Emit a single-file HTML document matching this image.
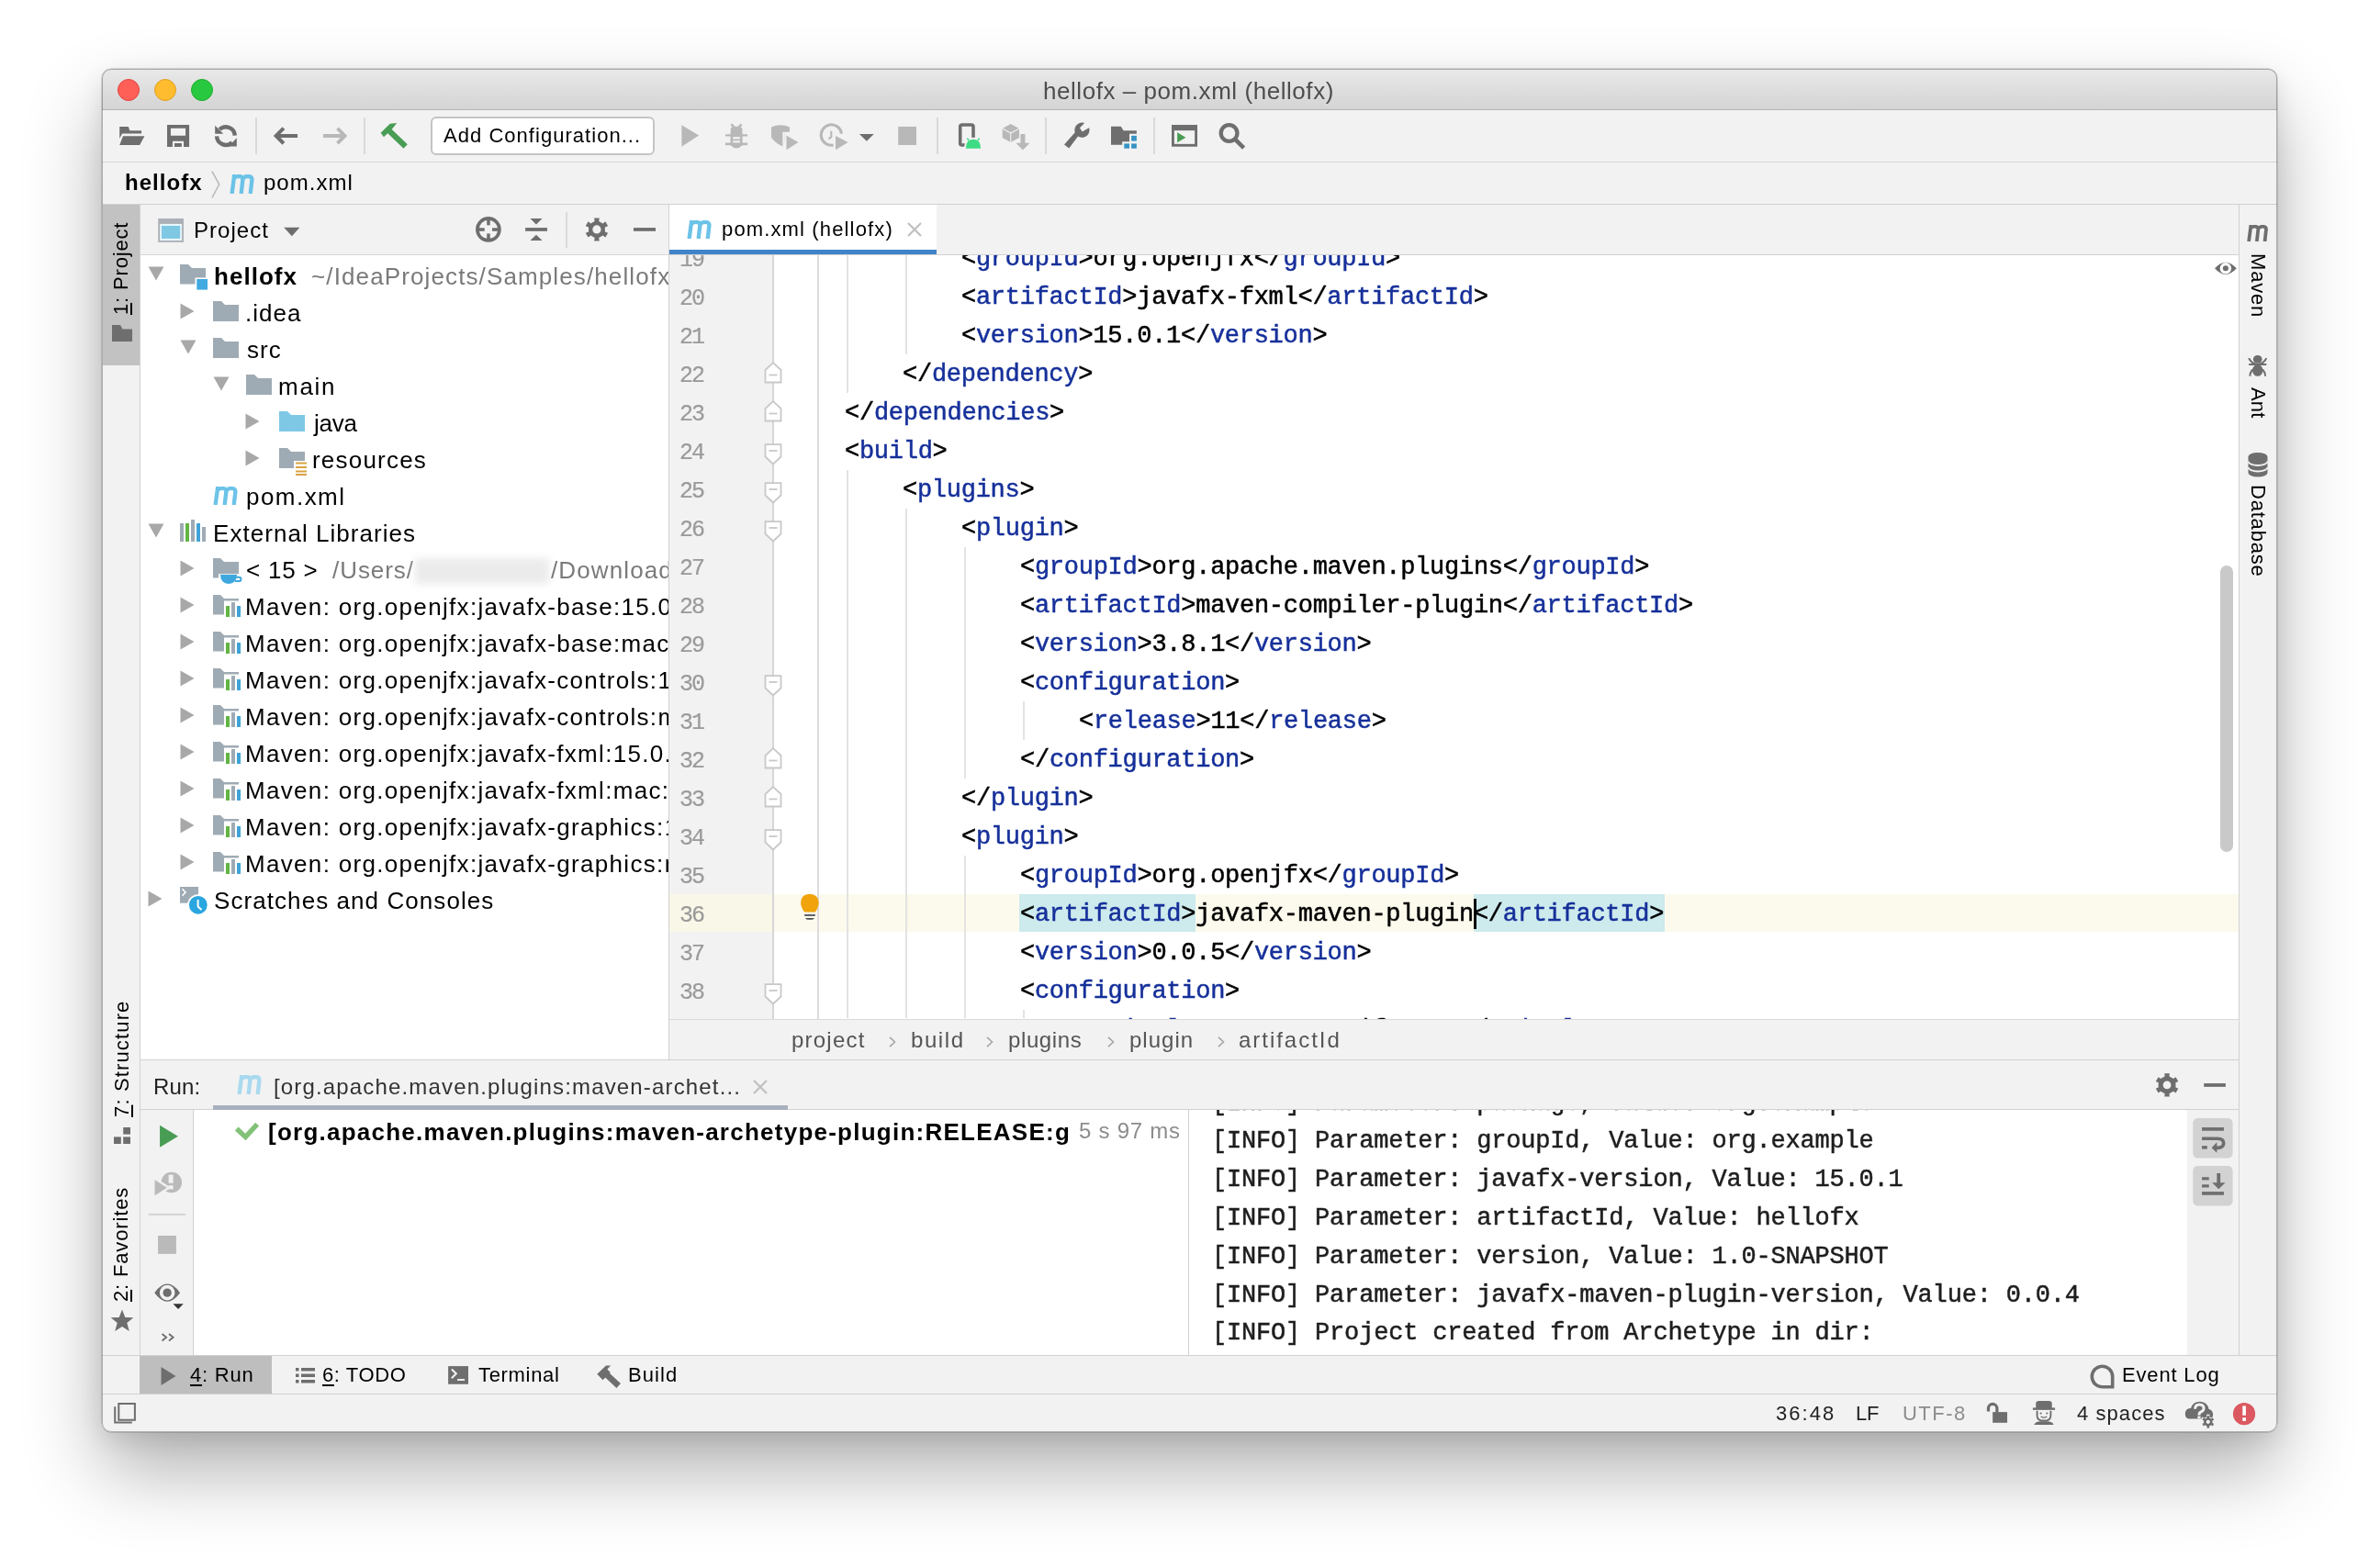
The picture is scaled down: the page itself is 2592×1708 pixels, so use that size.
<!DOCTYPE html><html><head><meta charset="utf-8"><style>
html,body{margin:0;padding:0;background:#fff;width:2592px;height:1708px;overflow:hidden;position:relative}
.t{position:absolute;white-space:nowrap;line-height:1;will-change:transform}
.r{position:absolute;display:block}
.clip{position:absolute;overflow:hidden}
u{text-decoration:underline;text-decoration-thickness:2px;text-underline-offset:3px}
#win{position:absolute;left:111px;top:75px;width:2369px;height:1485px;border-radius:10px;background:#f2f2f2;
 box-shadow:0 0 0 0.5px rgba(0,0,0,0.25), 0 42px 84px rgba(0,0,0,0.31), 0 8px 26px rgba(0,0,0,0.09)}
#wb{position:absolute;left:111px;top:75px;width:2369px;height:1485px;border-radius:10px;border:1px solid rgba(0,0,0,0.28);box-sizing:border-box;pointer-events:none}
</style></head><body>
<div id="win"></div>
<div class="r" style="left:111px;top:75px;width:2369px;height:44px;background:linear-gradient(#e9e9e9,#d4d4d4);border-radius:10px 10px 0 0"></div><div class="r" style="left:111px;top:119px;width:2369px;height:1px;background:#b4b4b4;"></div><div class="r" style="left:128px;top:86px;width:22px;height:22px;border-radius:50%;background:#fe5f57;border:1px solid #e1443e"></div><div class="r" style="left:168px;top:86px;width:22px;height:22px;border-radius:50%;background:#febc2e;border:1px solid #dfa023"></div><div class="r" style="left:208px;top:86px;width:22px;height:22px;border-radius:50%;background:#28c840;border:1px solid #1dad2b"></div><div class="t" style="left:1136.30px;top:85.99px;font-size:26px;color:#4d4d4d;font-weight:normal;letter-spacing:0.552px;font-family:'Liberation Sans', sans-serif;">hellofx – pom.xml (hellofx)</div><div class="r" style="left:111px;top:120px;width:2369px;height:56px;background:#f2f2f2;"></div><div class="r" style="left:111px;top:176px;width:2369px;height:1px;background:#d5d5d5;"></div><div class="r" style="left:469px;top:127px;width:244px;height:42px;background:#fff;border:2px solid #c4c4c4;border-radius:6px;box-sizing:border-box"></div><div class="t" style="left:483.00px;top:137.38px;font-size:22px;color:#000;font-weight:normal;letter-spacing:1.035px;font-family:'Liberation Sans', sans-serif;">Add Configuration...</div><div class="r" style="left:278px;top:128px;width:2px;height:40px;background:#d9d9d9;"></div><div class="r" style="left:396px;top:128px;width:2px;height:40px;background:#d9d9d9;"></div><div class="r" style="left:1020px;top:128px;width:2px;height:40px;background:#d9d9d9;"></div><div class="r" style="left:1138px;top:128px;width:2px;height:40px;background:#d9d9d9;"></div><div class="r" style="left:1256px;top:128px;width:2px;height:40px;background:#d9d9d9;"></div><div class="r" style="left:111px;top:177px;width:2369px;height:45px;background:#f2f2f2;"></div><div class="r" style="left:111px;top:222px;width:2369px;height:1px;background:#d1d1d1;"></div><div class="t" style="left:136.00px;top:187.38px;font-size:24px;color:#000;font-weight:bold;letter-spacing:1.034px;font-family:'Liberation Sans', sans-serif;">hellofx</div><div class="t" style="left:286.70px;top:187.38px;font-size:24px;color:#000;font-weight:normal;letter-spacing:1.025px;font-family:'Liberation Sans', sans-serif;">pom.xml</div><div class="r" style="left:112px;top:223px;width:40px;height:1253px;background:#f2f2f2;"></div><div class="r" style="left:152px;top:223px;width:1px;height:1253px;background:#d1d1d1;"></div><div class="r" style="left:112px;top:223px;width:40px;height:175px;background:#c2c2c2;"></div><div class="t" style="left:121.38px;top:342.60px;transform-origin:0 0;transform:rotate(-90deg);font-size:22px;color:#000;font-weight:normal;letter-spacing:0.831px;font-family:'Liberation Sans', sans-serif;"><u>1</u>: Project</div><div class="t" style="left:122.08px;top:1216.50px;transform-origin:0 0;transform:rotate(-90deg);font-size:22px;color:#000;font-weight:normal;letter-spacing:1.147px;font-family:'Liberation Sans', sans-serif;"><u>7</u>: Structure</div><div class="t" style="left:121.38px;top:1418.20px;transform-origin:0 0;transform:rotate(-90deg);font-size:22px;color:#000;font-weight:normal;letter-spacing:0.843px;font-family:'Liberation Sans', sans-serif;"><u>2</u>: Favorites</div><div class="r" style="left:2438px;top:223px;width:1px;height:1253px;background:#d1d1d1;"></div><div class="r" style="left:2439px;top:223px;width:41px;height:1253px;background:#f2f2f2;"></div><div class="t" style="left:2470.02px;top:276.20px;transform-origin:0 0;transform:rotate(90deg);font-size:22px;color:#000;font-weight:normal;letter-spacing:0.826px;font-family:'Liberation Sans', sans-serif;">Maven</div><div class="t" style="left:2470.02px;top:421.70px;transform-origin:0 0;transform:rotate(90deg);font-size:22px;color:#000;font-weight:normal;letter-spacing:0.195px;font-family:'Liberation Sans', sans-serif;">Ant</div><div class="t" style="left:2470.02px;top:527.50px;transform-origin:0 0;transform:rotate(90deg);font-size:22px;color:#000;font-weight:normal;letter-spacing:0.794px;font-family:'Liberation Sans', sans-serif;">Database</div><div class="r" style="left:153px;top:223px;width:575px;height:54px;background:#f2f2f2;"></div><div class="r" style="left:153px;top:277px;width:575px;height:1px;background:#d6d6d6;"></div><div class="r" style="left:153px;top:278px;width:575px;height:876px;background:#ffffff;"></div><div class="r" style="left:728px;top:223px;width:1px;height:932px;background:#d1d1d1;"></div><div class="t" style="left:210.50px;top:239.18px;font-size:24px;color:#000;font-weight:normal;letter-spacing:1.045px;font-family:'Liberation Sans', sans-serif;">Project</div><div class="r" style="left:616px;top:231px;width:2px;height:39px;background:#d9d9d9;"></div><div class="clip" style="left:153px;top:278px;width:575px;height:876px"><div style="position:absolute;left:-153px;top:-278px;width:2592px;height:1708px"><div class="t" style="left:232.50px;top:287.59px;font-size:26px;color:#000;font-weight:bold;letter-spacing:1.028px;font-family:'Liberation Sans', sans-serif;">hellofx</div><div class="t" style="left:338.70px;top:287.59px;font-size:26px;color:#7a7a7a;font-weight:normal;letter-spacing:1.120px;font-family:'Liberation Sans', sans-serif;">~/IdeaProjects/Samples/hellofx</div><div class="t" style="left:267.00px;top:327.59px;font-size:26px;color:#000;font-weight:normal;letter-spacing:1.020px;font-family:'Liberation Sans', sans-serif;">.idea</div><div class="t" style="left:269.00px;top:367.59px;font-size:26px;color:#000;font-weight:normal;letter-spacing:1.021px;font-family:'Liberation Sans', sans-serif;">src</div><div class="t" style="left:303.30px;top:407.59px;font-size:26px;color:#000;font-weight:normal;letter-spacing:1.735px;font-family:'Liberation Sans', sans-serif;">main</div><div class="t" style="left:341.60px;top:447.59px;font-size:26px;color:#000;font-weight:normal;letter-spacing:-0.279px;font-family:'Liberation Sans', sans-serif;">java</div><div class="t" style="left:339.60px;top:487.59px;font-size:26px;color:#000;font-weight:normal;letter-spacing:1.205px;font-family:'Liberation Sans', sans-serif;">resources</div><div class="t" style="left:268.00px;top:527.59px;font-size:26px;color:#000;font-weight:normal;letter-spacing:1.457px;font-family:'Liberation Sans', sans-serif;">pom.xml</div><div class="t" style="left:231.50px;top:567.59px;font-size:26px;color:#000;font-weight:normal;letter-spacing:1.046px;font-family:'Liberation Sans', sans-serif;">External Libraries</div><div class="t" style="left:268.00px;top:607.59px;font-size:26px;color:#000;font-weight:normal;letter-spacing:0.810px;font-family:'Liberation Sans', sans-serif;">&lt; 15 &gt;</div><div class="t" style="left:362.00px;top:607.59px;font-size:26px;color:#7a7a7a;font-weight:normal;letter-spacing:0.947px;font-family:'Liberation Sans', sans-serif;">/Users/</div><div class="r" style="left:452px;top:607.6px;width:146px;height:28px;background:#ebebeb;filter:blur(4px)"></div><div class="t" style="left:600.00px;top:607.59px;font-size:26px;color:#7a7a7a;font-weight:normal;letter-spacing:1.120px;font-family:'Liberation Sans', sans-serif;">/Downloads/jdk-15</div><div class="t" style="left:267.00px;top:647.59px;font-size:26px;color:#000;font-weight:normal;letter-spacing:1.320px;font-family:'Liberation Sans', sans-serif;">Maven: org.openjfx:javafx-base:15.0.1</div><div class="t" style="left:267.00px;top:687.59px;font-size:26px;color:#000;font-weight:normal;letter-spacing:1.320px;font-family:'Liberation Sans', sans-serif;">Maven: org.openjfx:javafx-base:mac:15.0.1</div><div class="t" style="left:267.00px;top:727.59px;font-size:26px;color:#000;font-weight:normal;letter-spacing:1.320px;font-family:'Liberation Sans', sans-serif;">Maven: org.openjfx:javafx-controls:15.0.1</div><div class="t" style="left:267.00px;top:767.59px;font-size:26px;color:#000;font-weight:normal;letter-spacing:1.320px;font-family:'Liberation Sans', sans-serif;">Maven: org.openjfx:javafx-controls:mac:15.0.1</div><div class="t" style="left:267.00px;top:807.59px;font-size:26px;color:#000;font-weight:normal;letter-spacing:1.320px;font-family:'Liberation Sans', sans-serif;">Maven: org.openjfx:javafx-fxml:15.0.1</div><div class="t" style="left:267.00px;top:847.59px;font-size:26px;color:#000;font-weight:normal;letter-spacing:1.320px;font-family:'Liberation Sans', sans-serif;">Maven: org.openjfx:javafx-fxml:mac:15.0.1</div><div class="t" style="left:267.00px;top:887.59px;font-size:26px;color:#000;font-weight:normal;letter-spacing:1.320px;font-family:'Liberation Sans', sans-serif;">Maven: org.openjfx:javafx-graphics:15.0.1</div><div class="t" style="left:267.00px;top:927.59px;font-size:26px;color:#000;font-weight:normal;letter-spacing:1.320px;font-family:'Liberation Sans', sans-serif;">Maven: org.openjfx:javafx-graphics:mac:15.0.1</div><div class="t" style="left:232.50px;top:967.59px;font-size:26px;color:#000;font-weight:normal;letter-spacing:1.070px;font-family:'Liberation Sans', sans-serif;">Scratches and Consoles</div></div></div><div class="r" style="left:729px;top:223px;width:1709px;height:54px;background:#f2f2f2;"></div><div class="r" style="left:729px;top:277px;width:1709px;height:1px;background:#d1d1d1;"></div><div class="r" style="left:729px;top:223px;width:291px;height:49px;background:#ffffff;"></div><div class="r" style="left:729px;top:272px;width:291px;height:5px;background:#4083c9;"></div><div class="t" style="left:785.90px;top:238.78px;font-size:22px;color:#000;font-weight:normal;letter-spacing:1.140px;font-family:'Liberation Sans', sans-serif;">pom.xml (hellofx)</div><div class="r" style="left:729px;top:278px;width:1709px;height:832px;background:#ffffff;"></div><div class="r" style="left:729px;top:278px;width:112px;height:832px;background:#f2f2f2;"></div><div class="r" style="left:729px;top:1110px;width:1709px;height:1px;background:#dadada;"></div><div class="r" style="left:729px;top:1111px;width:1709px;height:43px;background:#f2f2f2;"></div><div class="t" style="left:861.60px;top:1121.18px;font-size:24px;color:#555555;font-weight:normal;letter-spacing:1.222px;font-family:'Liberation Sans', sans-serif;">project</div><div class="t" style="left:992.20px;top:1121.18px;font-size:24px;color:#555555;font-weight:normal;letter-spacing:1.585px;font-family:'Liberation Sans', sans-serif;">build</div><div class="t" style="left:1098.00px;top:1121.18px;font-size:24px;color:#555555;font-weight:normal;letter-spacing:0.608px;font-family:'Liberation Sans', sans-serif;">plugins</div><div class="t" style="left:1229.60px;top:1121.18px;font-size:24px;color:#555555;font-weight:normal;letter-spacing:1.019px;font-family:'Liberation Sans', sans-serif;">plugin</div><div class="t" style="left:1349.40px;top:1121.18px;font-size:24px;color:#555555;font-weight:normal;letter-spacing:1.968px;font-family:'Liberation Sans', sans-serif;">artifactId</div><div class="r" style="left:153px;top:1154px;width:2285px;height:1px;background:#d1d1d1;"></div><div class="r" style="left:153px;top:1155px;width:2285px;height:54px;background:#f2f2f2;"></div><div class="r" style="left:153px;top:1208px;width:2285px;height:1px;background:#d1d1d1;"></div><div class="t" style="left:166.60px;top:1171.68px;font-size:24px;color:#222;font-weight:normal;letter-spacing:0.158px;font-family:'Liberation Sans', sans-serif;">Run:</div><div class="t" style="left:297.70px;top:1171.68px;font-size:24px;color:#333;font-weight:normal;letter-spacing:1.159px;font-family:'Liberation Sans', sans-serif;">[org.apache.maven.plugins:maven-archet...</div><div class="r" style="left:232px;top:1204px;width:626px;height:5px;background:#a8b0bf;"></div><div class="r" style="left:153px;top:1209px;width:58px;height:267px;background:#f2f2f2;"></div><div class="r" style="left:210px;top:1209px;width:1px;height:267px;background:#d1d1d1;"></div><div class="r" style="left:211px;top:1209px;width:1083px;height:267px;background:#ffffff;"></div><div class="r" style="left:1294px;top:1209px;width:1px;height:267px;background:#d1d1d1;"></div><div class="r" style="left:1295px;top:1209px;width:1087px;height:267px;background:#ffffff;"></div><div class="r" style="left:2382px;top:1209px;width:56px;height:267px;background:#f2f2f2;"></div><div class="clip" style="left:211px;top:1209px;width:954px;height:267px"><div style="position:absolute;left:-211px;top:-1209px;width:2592px;height:1708px"><div class="t" style="left:292.00px;top:1219.69px;font-size:26px;color:#000;font-weight:bold;letter-spacing:1.245px;font-family:'Liberation Sans', sans-serif;">[org.apache.maven.plugins:maven-archetype-plugin:RELEASE:generate]</div></div></div><div class="t" style="left:1175.00px;top:1219.68px;font-size:24px;color:#8c8c8c;font-weight:normal;letter-spacing:0.745px;font-family:'Liberation Sans', sans-serif;">5 s 97 ms</div><div class="clip" style="left:1295px;top:1209px;width:1087px;height:267px"><div style="position:absolute;left:-1295px;top:-1209px;width:2592px;height:1708px"><div class="t" style="left:1319.50px;top:1188.50px;font-size:27px;color:#1e1e1e;font-weight:normal;letter-spacing:-0.190px;font-family:'Liberation Mono', monospace;-webkit-text-stroke:0.5px currentColor;">[INFO] Parameter: package, Value: org.example</div></div></div><div class="t" style="left:1319.50px;top:1230.30px;font-size:27px;color:#1e1e1e;font-weight:normal;letter-spacing:-0.190px;font-family:'Liberation Mono', monospace;-webkit-text-stroke:0.5px currentColor;">[INFO] Parameter: groupId, Value: org.example</div><div class="t" style="left:1319.50px;top:1272.10px;font-size:27px;color:#1e1e1e;font-weight:normal;letter-spacing:-0.190px;font-family:'Liberation Mono', monospace;-webkit-text-stroke:0.5px currentColor;">[INFO] Parameter: javafx-version, Value: 15.0.1</div><div class="t" style="left:1319.50px;top:1313.90px;font-size:27px;color:#1e1e1e;font-weight:normal;letter-spacing:-0.190px;font-family:'Liberation Mono', monospace;-webkit-text-stroke:0.5px currentColor;">[INFO] Parameter: artifactId, Value: hellofx</div><div class="t" style="left:1319.50px;top:1355.70px;font-size:27px;color:#1e1e1e;font-weight:normal;letter-spacing:-0.190px;font-family:'Liberation Mono', monospace;-webkit-text-stroke:0.5px currentColor;">[INFO] Parameter: version, Value: 1.0-SNAPSHOT</div><div class="t" style="left:1319.50px;top:1397.50px;font-size:27px;color:#1e1e1e;font-weight:normal;letter-spacing:-0.190px;font-family:'Liberation Mono', monospace;-webkit-text-stroke:0.5px currentColor;">[INFO] Parameter: javafx-maven-plugin-version, Value: 0.0.4</div><div class="t" style="left:1319.50px;top:1439.30px;font-size:27px;color:#1e1e1e;font-weight:normal;letter-spacing:-0.190px;font-family:'Liberation Mono', monospace;-webkit-text-stroke:0.5px currentColor;">[INFO] Project created from Archetype in dir:</div><div class="r" style="left:111px;top:1476px;width:2369px;height:1px;background:#d1d1d1;"></div><div class="r" style="left:111px;top:1477px;width:2369px;height:41px;background:#f2f2f2;"></div><div class="r" style="left:152px;top:1477px;width:144px;height:41px;background:#bebebe;"></div><div class="t" style="left:206.70px;top:1487.08px;font-size:22px;color:#000;font-weight:normal;letter-spacing:0.783px;font-family:'Liberation Sans', sans-serif;"><u>4</u>: Run</div><div class="t" style="left:351.30px;top:1487.08px;font-size:22px;color:#000;font-weight:normal;letter-spacing:0.600px;font-family:'Liberation Sans', sans-serif;"><u>6</u>: TODO</div><div class="t" style="left:521.00px;top:1487.08px;font-size:22px;color:#000;font-weight:normal;letter-spacing:0.679px;font-family:'Liberation Sans', sans-serif;">Terminal</div><div class="t" style="left:684.00px;top:1487.08px;font-size:22px;color:#000;font-weight:normal;letter-spacing:1.079px;font-family:'Liberation Sans', sans-serif;">Build</div><div class="t" style="left:2310.80px;top:1487.08px;font-size:22px;color:#000;font-weight:normal;letter-spacing:0.833px;font-family:'Liberation Sans', sans-serif;">Event Log</div><div class="r" style="left:111px;top:1518px;width:2369px;height:1px;background:#d1d1d1;"></div><div class="r" style="left:111px;top:1519px;width:2369px;height:41px;background:#f2f2f2;border-radius:0 0 10px 10px"></div><div class="t" style="left:1934.00px;top:1529.38px;font-size:22px;color:#222;font-weight:normal;letter-spacing:2.045px;font-family:'Liberation Sans', sans-serif;">36:48</div><div class="t" style="left:2021.00px;top:1529.38px;font-size:22px;color:#222;font-weight:normal;letter-spacing:-0.235px;font-family:'Liberation Sans', sans-serif;">LF</div><div class="t" style="left:2071.60px;top:1529.38px;font-size:22px;color:#8c8c8c;font-weight:normal;letter-spacing:1.477px;font-family:'Liberation Sans', sans-serif;">UTF-8</div><div class="t" style="left:2262.00px;top:1529.38px;font-size:22px;color:#222;font-weight:normal;letter-spacing:1.064px;font-family:'Liberation Sans', sans-serif;">4 spaces</div><div class="clip" style="left:729px;top:278px;width:1709px;height:832px"><div style="position:absolute;left:-729px;top:-278px;width:2592px;height:1708px"><div class="r" style="left:729px;top:974px;width:1709px;height:41px;background:#fcfaed;"></div><div class="r" style="left:729px;top:974px;width:112px;height:41px;background:#f9f7e7;"></div><div class="r" style="left:1110px;top:974px;width:192px;height:41px;background:#cdeaed;"></div><div class="r" style="left:1605px;top:974px;width:208px;height:41px;background:#cdeaed;"></div><div class="r" style="left:890px;top:278px;width:2px;height:832px;background:#dcdcdc;"></div><div class="r" style="left:922px;top:278px;width:2px;height:150px;background:#e3e3e3;"></div><div class="r" style="left:922px;top:512px;width:2px;height:597px;background:#e3e3e3;"></div><div class="r" style="left:986px;top:278px;width:2px;height:108px;background:#e3e3e3;"></div><div class="r" style="left:986px;top:554px;width:2px;height:555px;background:#e3e3e3;"></div><div class="r" style="left:1050px;top:596px;width:2px;height:252px;background:#e3e3e3;"></div><div class="r" style="left:1050px;top:932px;width:2px;height:177px;background:#e3e3e3;"></div><div class="r" style="left:1114px;top:764px;width:2px;height:42px;background:#e3e3e3;"></div><div class="r" style="left:1114px;top:1100px;width:2px;height:9px;background:#e3e3e3;"></div><div class="r" style="left:841px;top:278px;width:2px;height:832px;background:#d6d6d6;"></div><div class="t" style="left:1047.16px;top:269.10px;font-size:27px;color:#000;font-weight:normal;letter-spacing:-0.270px;font-family:'Liberation Mono', monospace;-webkit-text-stroke:0.5px currentColor;">&lt;<span style="color:#16309a">groupId</span>&gt;org.openjfx&lt;/<span style="color:#16309a">groupId</span>&gt;</div><div class="t" style="left:740.40px;top:270.64px;font-size:25px;color:#9a9a9a;font-weight:normal;letter-spacing:-2.002px;font-family:'Liberation Mono', monospace;-webkit-text-stroke:0.5px currentColor;-webkit-text-stroke:0.2px currentColor;">19</div><div class="t" style="left:1047.16px;top:311.10px;font-size:27px;color:#000;font-weight:normal;letter-spacing:-0.270px;font-family:'Liberation Mono', monospace;-webkit-text-stroke:0.5px currentColor;">&lt;<span style="color:#16309a">artifactId</span>&gt;javafx-fxml&lt;/<span style="color:#16309a">artifactId</span>&gt;</div><div class="t" style="left:740.40px;top:312.64px;font-size:25px;color:#9a9a9a;font-weight:normal;letter-spacing:-2.002px;font-family:'Liberation Mono', monospace;-webkit-text-stroke:0.5px currentColor;-webkit-text-stroke:0.2px currentColor;">20</div><div class="t" style="left:1047.16px;top:353.10px;font-size:27px;color:#000;font-weight:normal;letter-spacing:-0.270px;font-family:'Liberation Mono', monospace;-webkit-text-stroke:0.5px currentColor;">&lt;<span style="color:#16309a">version</span>&gt;15.0.1&lt;/<span style="color:#16309a">version</span>&gt;</div><div class="t" style="left:740.40px;top:354.64px;font-size:25px;color:#9a9a9a;font-weight:normal;letter-spacing:-2.002px;font-family:'Liberation Mono', monospace;-webkit-text-stroke:0.5px currentColor;-webkit-text-stroke:0.2px currentColor;">21</div><div class="t" style="left:983.44px;top:395.10px;font-size:27px;color:#000;font-weight:normal;letter-spacing:-0.270px;font-family:'Liberation Mono', monospace;-webkit-text-stroke:0.5px currentColor;">&lt;/<span style="color:#16309a">dependency</span>&gt;</div><div class="t" style="left:740.40px;top:396.64px;font-size:25px;color:#9a9a9a;font-weight:normal;letter-spacing:-2.002px;font-family:'Liberation Mono', monospace;-webkit-text-stroke:0.5px currentColor;-webkit-text-stroke:0.2px currentColor;">22</div><div class="t" style="left:919.72px;top:437.10px;font-size:27px;color:#000;font-weight:normal;letter-spacing:-0.270px;font-family:'Liberation Mono', monospace;-webkit-text-stroke:0.5px currentColor;">&lt;/<span style="color:#16309a">dependencies</span>&gt;</div><div class="t" style="left:740.40px;top:438.64px;font-size:25px;color:#9a9a9a;font-weight:normal;letter-spacing:-2.002px;font-family:'Liberation Mono', monospace;-webkit-text-stroke:0.5px currentColor;-webkit-text-stroke:0.2px currentColor;">23</div><div class="t" style="left:919.72px;top:479.10px;font-size:27px;color:#000;font-weight:normal;letter-spacing:-0.270px;font-family:'Liberation Mono', monospace;-webkit-text-stroke:0.5px currentColor;">&lt;<span style="color:#16309a">build</span>&gt;</div><div class="t" style="left:740.40px;top:480.64px;font-size:25px;color:#9a9a9a;font-weight:normal;letter-spacing:-2.002px;font-family:'Liberation Mono', monospace;-webkit-text-stroke:0.5px currentColor;-webkit-text-stroke:0.2px currentColor;">24</div><div class="t" style="left:983.44px;top:521.10px;font-size:27px;color:#000;font-weight:normal;letter-spacing:-0.270px;font-family:'Liberation Mono', monospace;-webkit-text-stroke:0.5px currentColor;">&lt;<span style="color:#16309a">plugins</span>&gt;</div><div class="t" style="left:740.40px;top:522.64px;font-size:25px;color:#9a9a9a;font-weight:normal;letter-spacing:-2.002px;font-family:'Liberation Mono', monospace;-webkit-text-stroke:0.5px currentColor;-webkit-text-stroke:0.2px currentColor;">25</div><div class="t" style="left:1047.16px;top:563.10px;font-size:27px;color:#000;font-weight:normal;letter-spacing:-0.270px;font-family:'Liberation Mono', monospace;-webkit-text-stroke:0.5px currentColor;">&lt;<span style="color:#16309a">plugin</span>&gt;</div><div class="t" style="left:740.40px;top:564.64px;font-size:25px;color:#9a9a9a;font-weight:normal;letter-spacing:-2.002px;font-family:'Liberation Mono', monospace;-webkit-text-stroke:0.5px currentColor;-webkit-text-stroke:0.2px currentColor;">26</div><div class="t" style="left:1110.88px;top:605.10px;font-size:27px;color:#000;font-weight:normal;letter-spacing:-0.270px;font-family:'Liberation Mono', monospace;-webkit-text-stroke:0.5px currentColor;">&lt;<span style="color:#16309a">groupId</span>&gt;org.apache.maven.plugins&lt;/<span style="color:#16309a">groupId</span>&gt;</div><div class="t" style="left:740.40px;top:606.64px;font-size:25px;color:#9a9a9a;font-weight:normal;letter-spacing:-2.002px;font-family:'Liberation Mono', monospace;-webkit-text-stroke:0.5px currentColor;-webkit-text-stroke:0.2px currentColor;">27</div><div class="t" style="left:1110.88px;top:647.10px;font-size:27px;color:#000;font-weight:normal;letter-spacing:-0.270px;font-family:'Liberation Mono', monospace;-webkit-text-stroke:0.5px currentColor;">&lt;<span style="color:#16309a">artifactId</span>&gt;maven-compiler-plugin&lt;/<span style="color:#16309a">artifactId</span>&gt;</div><div class="t" style="left:740.40px;top:648.64px;font-size:25px;color:#9a9a9a;font-weight:normal;letter-spacing:-2.002px;font-family:'Liberation Mono', monospace;-webkit-text-stroke:0.5px currentColor;-webkit-text-stroke:0.2px currentColor;">28</div><div class="t" style="left:1110.88px;top:689.10px;font-size:27px;color:#000;font-weight:normal;letter-spacing:-0.270px;font-family:'Liberation Mono', monospace;-webkit-text-stroke:0.5px currentColor;">&lt;<span style="color:#16309a">version</span>&gt;3.8.1&lt;/<span style="color:#16309a">version</span>&gt;</div><div class="t" style="left:740.40px;top:690.64px;font-size:25px;color:#9a9a9a;font-weight:normal;letter-spacing:-2.002px;font-family:'Liberation Mono', monospace;-webkit-text-stroke:0.5px currentColor;-webkit-text-stroke:0.2px currentColor;">29</div><div class="t" style="left:1110.88px;top:731.10px;font-size:27px;color:#000;font-weight:normal;letter-spacing:-0.270px;font-family:'Liberation Mono', monospace;-webkit-text-stroke:0.5px currentColor;">&lt;<span style="color:#16309a">configuration</span>&gt;</div><div class="t" style="left:740.40px;top:732.64px;font-size:25px;color:#9a9a9a;font-weight:normal;letter-spacing:-2.002px;font-family:'Liberation Mono', monospace;-webkit-text-stroke:0.5px currentColor;-webkit-text-stroke:0.2px currentColor;">30</div><div class="t" style="left:1174.60px;top:773.10px;font-size:27px;color:#000;font-weight:normal;letter-spacing:-0.270px;font-family:'Liberation Mono', monospace;-webkit-text-stroke:0.5px currentColor;">&lt;<span style="color:#16309a">release</span>&gt;11&lt;/<span style="color:#16309a">release</span>&gt;</div><div class="t" style="left:740.40px;top:774.64px;font-size:25px;color:#9a9a9a;font-weight:normal;letter-spacing:-2.002px;font-family:'Liberation Mono', monospace;-webkit-text-stroke:0.5px currentColor;-webkit-text-stroke:0.2px currentColor;">31</div><div class="t" style="left:1110.88px;top:815.10px;font-size:27px;color:#000;font-weight:normal;letter-spacing:-0.270px;font-family:'Liberation Mono', monospace;-webkit-text-stroke:0.5px currentColor;">&lt;/<span style="color:#16309a">configuration</span>&gt;</div><div class="t" style="left:740.40px;top:816.64px;font-size:25px;color:#9a9a9a;font-weight:normal;letter-spacing:-2.002px;font-family:'Liberation Mono', monospace;-webkit-text-stroke:0.5px currentColor;-webkit-text-stroke:0.2px currentColor;">32</div><div class="t" style="left:1047.16px;top:857.10px;font-size:27px;color:#000;font-weight:normal;letter-spacing:-0.270px;font-family:'Liberation Mono', monospace;-webkit-text-stroke:0.5px currentColor;">&lt;/<span style="color:#16309a">plugin</span>&gt;</div><div class="t" style="left:740.40px;top:858.64px;font-size:25px;color:#9a9a9a;font-weight:normal;letter-spacing:-2.002px;font-family:'Liberation Mono', monospace;-webkit-text-stroke:0.5px currentColor;-webkit-text-stroke:0.2px currentColor;">33</div><div class="t" style="left:1047.16px;top:899.10px;font-size:27px;color:#000;font-weight:normal;letter-spacing:-0.270px;font-family:'Liberation Mono', monospace;-webkit-text-stroke:0.5px currentColor;">&lt;<span style="color:#16309a">plugin</span>&gt;</div><div class="t" style="left:740.40px;top:900.64px;font-size:25px;color:#9a9a9a;font-weight:normal;letter-spacing:-2.002px;font-family:'Liberation Mono', monospace;-webkit-text-stroke:0.5px currentColor;-webkit-text-stroke:0.2px currentColor;">34</div><div class="t" style="left:1110.88px;top:941.10px;font-size:27px;color:#000;font-weight:normal;letter-spacing:-0.270px;font-family:'Liberation Mono', monospace;-webkit-text-stroke:0.5px currentColor;">&lt;<span style="color:#16309a">groupId</span>&gt;org.openjfx&lt;/<span style="color:#16309a">groupId</span>&gt;</div><div class="t" style="left:740.40px;top:942.64px;font-size:25px;color:#9a9a9a;font-weight:normal;letter-spacing:-2.002px;font-family:'Liberation Mono', monospace;-webkit-text-stroke:0.5px currentColor;-webkit-text-stroke:0.2px currentColor;">35</div><div class="t" style="left:1110.88px;top:983.10px;font-size:27px;color:#000;font-weight:normal;letter-spacing:-0.270px;font-family:'Liberation Mono', monospace;-webkit-text-stroke:0.5px currentColor;">&lt;<span style="color:#16309a">artifactId</span>&gt;javafx-maven-plugin&lt;/<span style="color:#16309a">artifactId</span>&gt;</div><div class="t" style="left:740.40px;top:984.64px;font-size:25px;color:#9a9a9a;font-weight:normal;letter-spacing:-2.002px;font-family:'Liberation Mono', monospace;-webkit-text-stroke:0.5px currentColor;-webkit-text-stroke:0.2px currentColor;">36</div><div class="t" style="left:1110.88px;top:1025.10px;font-size:27px;color:#000;font-weight:normal;letter-spacing:-0.270px;font-family:'Liberation Mono', monospace;-webkit-text-stroke:0.5px currentColor;">&lt;<span style="color:#16309a">version</span>&gt;0.0.5&lt;/<span style="color:#16309a">version</span>&gt;</div><div class="t" style="left:740.40px;top:1026.64px;font-size:25px;color:#9a9a9a;font-weight:normal;letter-spacing:-2.002px;font-family:'Liberation Mono', monospace;-webkit-text-stroke:0.5px currentColor;-webkit-text-stroke:0.2px currentColor;">37</div><div class="t" style="left:1110.88px;top:1067.10px;font-size:27px;color:#000;font-weight:normal;letter-spacing:-0.270px;font-family:'Liberation Mono', monospace;-webkit-text-stroke:0.5px currentColor;">&lt;<span style="color:#16309a">configuration</span>&gt;</div><div class="t" style="left:740.40px;top:1068.64px;font-size:25px;color:#9a9a9a;font-weight:normal;letter-spacing:-2.002px;font-family:'Liberation Mono', monospace;-webkit-text-stroke:0.5px currentColor;-webkit-text-stroke:0.2px currentColor;">38</div><div class="t" style="left:1174.60px;top:1109.10px;font-size:27px;color:#000;font-weight:normal;letter-spacing:-0.270px;font-family:'Liberation Mono', monospace;-webkit-text-stroke:0.5px currentColor;">&lt;<span style="color:#16309a">mainClass</span>&gt;org.openjfx.App&lt;/<span style="color:#16309a">mainClass</span>&gt;</div><div class="t" style="left:740.40px;top:1110.64px;font-size:25px;color:#9a9a9a;font-weight:normal;letter-spacing:-2.002px;font-family:'Liberation Mono', monospace;-webkit-text-stroke:0.5px currentColor;-webkit-text-stroke:0.2px currentColor;">39</div></div></div><div class="r" style="left:1605px;top:979px;width:3px;height:33px;background:#000;"></div><svg class="r" style="left:120px;top:125px" width="180" height="45" viewBox="0 0 2380 595" preserveAspectRatio="none">
<path fill="#6e6e6e" d="M135,172 H262 L282,228 H450 V272 H172 L135,345 Z"/>
<path fill="#6e6e6e" d="M185,308 H495 L425,435 H135 Z"/>
<path fill="#6e6e6e" fill-rule="evenodd" d="M820,145 H1138 V462 H1058 V380 H898 V462 H820 Z M872,195 V302 H1085 V195 Z"/>
<rect fill="#6e6e6e" x="925" y="410" width="105" height="52"/>
<path fill="none" stroke="#6e6e6e" stroke-width="58" d="M1575,212 A130,130 0 0 1 1795,300"/>
<path fill="none" stroke="#6e6e6e" stroke-width="58" d="M1755,398 A130,130 0 0 1 1535,310"/>
<path fill="#6e6e6e" d="M1510,155 V275 H1630 Z"/>
<path fill="#6e6e6e" d="M1822,335 V455 H1702 Z"/>
</svg><svg class="r" style="left:290px;top:125px" width="180" height="45" viewBox="0 0 2380 595" preserveAspectRatio="none">
<path fill="none" stroke="#6e6e6e" stroke-width="52" d="M250,192 L140,303 L250,413 M140,303 H450"/>
<path fill="none" stroke="#b8b8b8" stroke-width="52" d="M1025,195 L1130,303 L1025,410 M820,303 H1130"/>
<path fill="#499c54" d="M1648,262 L1782,128 L1880,120 L1812,205 L1692,320 Z"/>
<path fill="none" stroke="#499c54" stroke-width="82" d="M1760,222 L2005,455"/>
</svg><svg class="r" style="left:730px;top:125px" width="280" height="45" viewBox="0 0 2380 382" preserveAspectRatio="none">
<path fill="#b8b8b8" d="M105,95 L265,190 L105,295 Z"/>
<path fill="#b8b8b8" d="M560,120 Q612,95 665,120 L668,180 H715 V200 H668 V258 H715 V283 H668 Q640,310 612,310 Q585,310 557,283 H510 V258 H557 V200 H510 V180 H557 Z"/>
<rect fill="#f2f2f2" x="580" y="205" width="65" height="20"/><rect fill="#f2f2f2" x="580" y="240" width="65" height="18"/>
<path fill="none" stroke="#b8b8b8" stroke-width="22" d="M565,88 L592,118 M660,88 L633,118"/>
<path fill="#b8b8b8" d="M935,115 Q1020,75 1105,115 V160 H1060 V240 L1040,290 Q980,270 935,210 Z"/>
<path fill="#f2f2f2" d="M1040,160 H1060 V250 L1040,290 Z"/>
<path fill="#b8b8b8" d="M1075,190 L1185,255 L1075,325 Z"/>
<path fill="none" stroke="#b8b8b8" stroke-width="26" d="M1510,280 A95,95 0 1 1 1585,175"/>
<path fill="none" stroke="#b8b8b8" stroke-width="18" d="M1490,150 V205 L1465,225"/>
<path fill="#b8b8b8" d="M1530,195 L1645,255 L1530,325 Z"/>
<path fill="#6e6e6e" d="M1750,178 H1885 L1818,243 Z"/>
<rect fill="#b8b8b8" x="2110" y="110" width="168" height="170"/>
</svg><svg class="r" style="left:1030px;top:120px" width="340" height="55" viewBox="0 0 2380 385" preserveAspectRatio="none">
<path fill="none" stroke="#6e6e6e" stroke-width="25" d="M152,266 H124 Q110,266 110,252 V126 Q110,112 124,112 H196 Q210,112 210,126 V218"/>
<path fill="#f2f2f2" d="M140,300 Q140,208 210,208 Q280,208 280,300 Z"/>
<path fill="#3ddc84" d="M153,293 Q153,222 210,222 Q267,222 267,293 Z"/>
<path fill="none" stroke="#3ddc84" stroke-width="11" d="M176,232 L164,214 M244,232 L256,214"/>
<path fill="#b8b8b8" d="M432,140 L495,105 L560,140 V210 L495,245 L432,210 Z"/>
<path fill="none" stroke="#f2f2f2" stroke-width="8" d="M432,140 L495,175 L560,140 M495,175 V245"/>
<path fill="#b8b8b8" d="M570,182 H605 V250 H640 L588,305 L535,250 H570 Z"/>
<path fill="#6e6e6e" d="M1040,95 A57,57 0 1 1 1008,200 L940,290 L903,262 L985,170 A57,57 0 0 1 1040,95 Z"/><path fill="#f2f2f2" d="M1075,80 L1022,135 L1040,165 L1110,125 Z"/>
<path fill="#6e6e6e" d="M1260,125 H1335 L1355,155 H1455 V265 H1260 Z"/>
<rect fill="#f2f2f2" x="1400" y="180" width="70" height="125"/><rect fill="#f2f2f2" x="1345" y="240" width="125" height="65"/>
<rect fill="#3592c4" x="1415" y="195" width="40" height="40"/><rect fill="#3592c4" x="1360" y="255" width="40" height="37"/><rect fill="#3592c4" x="1415" y="255" width="40" height="37"/>
<rect fill="none" stroke="#6e6e6e" stroke-width="20" x="1732" y="122" width="176" height="146"/>
<rect fill="#6e6e6e" x="1722" y="112" width="196" height="43"/>
<path fill="#499c54" d="M1765,170 L1830,208 L1765,247 Z"/>
<circle fill="none" stroke="#6e6e6e" stroke-width="30" cx="2160" cy="175" r="62"/>
<path fill="none" stroke="#6e6e6e" stroke-width="32" d="M2205,222 L2272,288"/>
</svg><svg class="r" style="left:120px;top:180px" width="300" height="45" viewBox="0 0 2380 357" preserveAspectRatio="none">
<path fill="none" stroke="#b4b4b4" stroke-width="11" d="M880,52 L942,165 L880,282"/>

</svg><svg class="r" style="left:155px;top:225px" width="200" height="50" viewBox="0 0 2380 595" preserveAspectRatio="none">
<rect fill="#abb0b6" x="205" y="155" width="330" height="307"/>
<rect fill="#e8f6fc" x="228" y="225" width="285" height="215"/>
<rect fill="#7ec8e3" x="250" y="250" width="240" height="165"/>
<path fill="#6e6e6e" d="M1835,272 H2040 L1938,385 Z"/>
</svg><svg class="r" style="left:500px;top:225px" width="220" height="50" viewBox="0 0 2380 541" preserveAspectRatio="none">
<circle fill="none" stroke="#6e6e6e" stroke-width="40" cx="345" cy="270" r="130"/>
<rect fill="#6e6e6e" x="327" y="155" width="38" height="65"/><rect fill="#6e6e6e" x="327" y="318" width="38" height="75"/>
<rect fill="#6e6e6e" x="225" y="252" width="75" height="38"/><rect fill="#6e6e6e" x="390" y="252" width="75" height="38"/>
<path fill="#6e6e6e" d="M838,142 H980 L908,210 Z M838,400 H980 L908,332 Z"/><rect fill="#6e6e6e" x="780" y="250" width="258" height="40"/>
<path fill="#6e6e6e" fill-rule="evenodd" d="M1597.0,173.2 L1591.9,135.3 L1652.1,135.3 L1647.0,173.2 L1693.3,199.9 L1723.6,176.6 L1753.7,228.7 L1718.4,243.3 L1718.4,296.7 L1753.7,311.3 L1723.6,363.4 L1693.3,340.1 L1647.0,366.8 L1652.1,404.7 L1591.9,404.7 L1597.0,366.8 L1550.7,340.1 L1520.4,363.4 L1490.3,311.3 L1525.6,296.7 L1525.6,243.3 L1490.3,228.7 L1520.4,176.6 L1550.7,199.9 Z M1672,270 A50,50 0 1 0 1572,270 A50,50 0 1 0 1672,270 Z"/>
<rect fill="#6e6e6e" x="2055" y="250" width="260" height="40"/>
</svg><svg class="r" style="left:249px;top:190px" width="30" height="21" viewBox="0 0 100 70" preserveAspectRatio="none"><path fill="none" stroke="#6cc3e8" stroke-width="14.5" d="M12,70 L21,0 M20.5,14 Q25,6.7 37,6.7 Q52.5,6.7 51,21 L45.5,70 M51,17 Q56,6.7 69.5,6.7 Q86.5,6.7 84.5,21 L79,70"/></svg><svg class="r" style="left:747px;top:240px" width="30" height="20" viewBox="0 0 100 70" preserveAspectRatio="none"><path fill="none" stroke="#6cc3e8" stroke-width="14.5" d="M12,70 L21,0 M20.5,14 Q25,6.7 37,6.7 Q52.5,6.7 51,21 L45.5,70 M51,17 Q56,6.7 69.5,6.7 Q86.5,6.7 84.5,21 L79,70"/></svg><svg class="r" style="left:2446px;top:245px" width="26" height="18" viewBox="0 0 100 70" preserveAspectRatio="none"><path fill="none" stroke="#6e6e6e" stroke-width="14.5" d="M12,70 L21,0 M20.5,14 Q25,6.7 37,6.7 Q52.5,6.7 51,21 L45.5,70 M51,17 Q56,6.7 69.5,6.7 Q86.5,6.7 84.5,21 L79,70"/></svg><svg class="r" style="left:988px;top:242px" width="16" height="16" viewBox="0 0 16 16"><path d="M1,1 L15,15 M15,1 L1,15" stroke="#c0c0c0" stroke-width="2.2"/></svg><div class="clip" style="left:153px;top:278px;width:575px;height:876px"><div style="position:absolute;left:-153px;top:-278px;width:2592px;height:1708px"><svg class="r" style="left:160.5px;top:290.1px" width="18" height="16" viewBox="0 0 18 16"><path fill="#a8a8a8" d="M0.5,0.5 H17.5 L9,15.5 Z"/></svg><svg class="r" style="left:196px;top:288.0px" width="30" height="28" viewBox="0 0 30 28"><path fill="#9fabb4" d="M0,0 H9 L13,4 H28 V21.6 H0 Z"/><rect fill="#fff" x="16.5" y="14.5" width="13.5" height="13.5"/><rect fill="#3fa9e0" x="18.3" y="16" width="11.7" height="11.6"/></svg><svg class="r" style="left:196.1px;top:329.8px" width="16" height="18" viewBox="0 0 16 18"><path fill="#a8a8a8" d="M0.5,0.5 L15.5,9 L0.5,17.5 Z"/></svg><svg class="r" style="left:232px;top:328.1px" width="28" height="22" viewBox="0 0 28 22"><path fill="#9fabb4" d="M0,0 H9 L13,4 H28 V22 H0 Z"/></svg><svg class="r" style="left:196.1px;top:370.1px" width="18" height="16" viewBox="0 0 18 16"><path fill="#a8a8a8" d="M0.5,0.5 H17.5 L9,15.5 Z"/></svg><svg class="r" style="left:232px;top:368.1px" width="28" height="22" viewBox="0 0 28 22"><path fill="#9fabb4" d="M0,0 H9 L13,4 H28 V22 H0 Z"/></svg><svg class="r" style="left:231.7px;top:410.1px" width="18" height="16" viewBox="0 0 18 16"><path fill="#a8a8a8" d="M0.5,0.5 H17.5 L9,15.5 Z"/></svg><svg class="r" style="left:268px;top:408.1px" width="28" height="22" viewBox="0 0 28 22"><path fill="#9fabb4" d="M0,0 H9 L13,4 H28 V22 H0 Z"/></svg><svg class="r" style="left:267.3px;top:449.8px" width="16" height="18" viewBox="0 0 16 18"><path fill="#a8a8a8" d="M0.5,0.5 L15.5,9 L0.5,17.5 Z"/></svg><svg class="r" style="left:304px;top:448.1px" width="28" height="22" viewBox="0 0 28 22"><path fill="#7ec8e6" d="M0,0 H9 L13,4 H28 V22 H0 Z"/></svg><svg class="r" style="left:267.3px;top:489.8px" width="16" height="18" viewBox="0 0 16 18"><path fill="#a8a8a8" d="M0.5,0.5 L15.5,9 L0.5,17.5 Z"/></svg><svg class="r" style="left:304px;top:488.1px" width="28" height="22" viewBox="0 0 28 22"><path fill="#9fabb4" d="M0,0 H9 L13,4 H28 V22 H0 Z"/></svg><svg class="r" style="left:320px;top:501.6px" width="15" height="16" viewBox="0 0 15 16"><rect fill="#fff" x="0" y="0" width="15" height="16"/><g fill="#d9a343"><rect x="2" y="1.5" width="12" height="2"/><rect x="2" y="6" width="12" height="2"/><rect x="2" y="10.5" width="12" height="2"/><rect x="2" y="14" width="12" height="2"/></g></svg><svg class="r" style="left:231px;top:530.1px" width="30" height="20" viewBox="0 0 100 70" preserveAspectRatio="none"><path fill="none" stroke="#6cc3e8" stroke-width="14.5" d="M12,70 L21,0 M20.5,14 Q25,6.7 37,6.7 Q52.5,6.7 51,21 L45.5,70 M51,17 Q56,6.7 69.5,6.7 Q86.5,6.7 84.5,21 L79,70"/></svg><svg class="r" style="left:160.5px;top:570.1px" width="18" height="16" viewBox="0 0 18 16"><path fill="#a8a8a8" d="M0.5,0.5 H17.5 L9,15.5 Z"/></svg><svg class="r" style="left:196px;top:566.1px" width="28" height="24" viewBox="0 0 28 24"><rect fill="#9fabb4" x="0" y="4" width="4" height="20"/><rect fill="#62b543" x="6" y="4" width="4" height="20"/><rect fill="#9fabb4" x="12" y="0" width="4" height="24"/><rect fill="#40a3d8" x="18" y="4" width="4" height="20"/><rect fill="#9fabb4" x="24" y="8" width="4" height="16"/></svg><svg class="r" style="left:196.1px;top:609.8000000000001px" width="16" height="18" viewBox="0 0 16 18"><path fill="#a8a8a8" d="M0.5,0.5 L15.5,9 L0.5,17.5 Z"/></svg><svg class="r" style="left:232px;top:608.1px" width="32" height="30" viewBox="0 0 32 30"><path fill="#9fabb4" d="M0,0 H8 L12,4 H28 V17.5 H6 V21.5 H0 Z"/><path fill="#fff" d="M6,17.5 H28 V19 H34 V30 H6 Z"/><path fill="#3ea8de" d="M8,18 H26 Q26,27.6 17,28 Q8,27.6 8,18 Z"/><path fill="none" stroke="#3ea8de" stroke-width="2" d="M25,20.8 H28.2 Q30.5,20.8 30.5,22.9 Q30.5,25 28.2,25 H24"/></svg><svg class="r" style="left:196.1px;top:649.8000000000001px" width="16" height="18" viewBox="0 0 16 18"><path fill="#a8a8a8" d="M0.5,0.5 L15.5,9 L0.5,17.5 Z"/></svg><svg class="r" style="left:232px;top:648.1px" width="32" height="24" viewBox="0 0 32 24"><path fill="#9fabb4" d="M0,0 H8 L12,4 H28 V21.5 H0 Z"/><rect fill="#fff" x="12" y="6.5" width="18" height="17.5"/><rect fill="#62b543" x="14" y="12" width="4" height="12"/><rect fill="#9fabb4" x="20" y="8" width="4" height="16"/><rect fill="#40a3d8" x="26" y="12" width="4" height="12"/></svg><svg class="r" style="left:196.1px;top:689.8000000000001px" width="16" height="18" viewBox="0 0 16 18"><path fill="#a8a8a8" d="M0.5,0.5 L15.5,9 L0.5,17.5 Z"/></svg><svg class="r" style="left:232px;top:688.1px" width="32" height="24" viewBox="0 0 32 24"><path fill="#9fabb4" d="M0,0 H8 L12,4 H28 V21.5 H0 Z"/><rect fill="#fff" x="12" y="6.5" width="18" height="17.5"/><rect fill="#62b543" x="14" y="12" width="4" height="12"/><rect fill="#9fabb4" x="20" y="8" width="4" height="16"/><rect fill="#40a3d8" x="26" y="12" width="4" height="12"/></svg><svg class="r" style="left:196.1px;top:729.8000000000001px" width="16" height="18" viewBox="0 0 16 18"><path fill="#a8a8a8" d="M0.5,0.5 L15.5,9 L0.5,17.5 Z"/></svg><svg class="r" style="left:232px;top:728.1px" width="32" height="24" viewBox="0 0 32 24"><path fill="#9fabb4" d="M0,0 H8 L12,4 H28 V21.5 H0 Z"/><rect fill="#fff" x="12" y="6.5" width="18" height="17.5"/><rect fill="#62b543" x="14" y="12" width="4" height="12"/><rect fill="#9fabb4" x="20" y="8" width="4" height="16"/><rect fill="#40a3d8" x="26" y="12" width="4" height="12"/></svg><svg class="r" style="left:196.1px;top:769.8000000000001px" width="16" height="18" viewBox="0 0 16 18"><path fill="#a8a8a8" d="M0.5,0.5 L15.5,9 L0.5,17.5 Z"/></svg><svg class="r" style="left:232px;top:768.1px" width="32" height="24" viewBox="0 0 32 24"><path fill="#9fabb4" d="M0,0 H8 L12,4 H28 V21.5 H0 Z"/><rect fill="#fff" x="12" y="6.5" width="18" height="17.5"/><rect fill="#62b543" x="14" y="12" width="4" height="12"/><rect fill="#9fabb4" x="20" y="8" width="4" height="16"/><rect fill="#40a3d8" x="26" y="12" width="4" height="12"/></svg><svg class="r" style="left:196.1px;top:809.8000000000001px" width="16" height="18" viewBox="0 0 16 18"><path fill="#a8a8a8" d="M0.5,0.5 L15.5,9 L0.5,17.5 Z"/></svg><svg class="r" style="left:232px;top:808.1px" width="32" height="24" viewBox="0 0 32 24"><path fill="#9fabb4" d="M0,0 H8 L12,4 H28 V21.5 H0 Z"/><rect fill="#fff" x="12" y="6.5" width="18" height="17.5"/><rect fill="#62b543" x="14" y="12" width="4" height="12"/><rect fill="#9fabb4" x="20" y="8" width="4" height="16"/><rect fill="#40a3d8" x="26" y="12" width="4" height="12"/></svg><svg class="r" style="left:196.1px;top:849.8000000000001px" width="16" height="18" viewBox="0 0 16 18"><path fill="#a8a8a8" d="M0.5,0.5 L15.5,9 L0.5,17.5 Z"/></svg><svg class="r" style="left:232px;top:848.1px" width="32" height="24" viewBox="0 0 32 24"><path fill="#9fabb4" d="M0,0 H8 L12,4 H28 V21.5 H0 Z"/><rect fill="#fff" x="12" y="6.5" width="18" height="17.5"/><rect fill="#62b543" x="14" y="12" width="4" height="12"/><rect fill="#9fabb4" x="20" y="8" width="4" height="16"/><rect fill="#40a3d8" x="26" y="12" width="4" height="12"/></svg><svg class="r" style="left:196.1px;top:889.8000000000001px" width="16" height="18" viewBox="0 0 16 18"><path fill="#a8a8a8" d="M0.5,0.5 L15.5,9 L0.5,17.5 Z"/></svg><svg class="r" style="left:232px;top:888.1px" width="32" height="24" viewBox="0 0 32 24"><path fill="#9fabb4" d="M0,0 H8 L12,4 H28 V21.5 H0 Z"/><rect fill="#fff" x="12" y="6.5" width="18" height="17.5"/><rect fill="#62b543" x="14" y="12" width="4" height="12"/><rect fill="#9fabb4" x="20" y="8" width="4" height="16"/><rect fill="#40a3d8" x="26" y="12" width="4" height="12"/></svg><svg class="r" style="left:196.1px;top:929.8000000000001px" width="16" height="18" viewBox="0 0 16 18"><path fill="#a8a8a8" d="M0.5,0.5 L15.5,9 L0.5,17.5 Z"/></svg><svg class="r" style="left:232px;top:928.1px" width="32" height="24" viewBox="0 0 32 24"><path fill="#9fabb4" d="M0,0 H8 L12,4 H28 V21.5 H0 Z"/><rect fill="#fff" x="12" y="6.5" width="18" height="17.5"/><rect fill="#62b543" x="14" y="12" width="4" height="12"/><rect fill="#9fabb4" x="20" y="8" width="4" height="16"/><rect fill="#40a3d8" x="26" y="12" width="4" height="12"/></svg><svg class="r" style="left:160.5px;top:969.8000000000001px" width="16" height="18" viewBox="0 0 16 18"><path fill="#a8a8a8" d="M0.5,0.5 L15.5,9 L0.5,17.5 Z"/></svg><svg class="r" style="left:196px;top:966.0px" width="30" height="32" viewBox="0 0 30 32"><rect fill="#9fabb4" x="0" y="0" width="20" height="17.7"/><path fill="none" stroke="#fff" stroke-width="1.6" d="M2.5,2.2 L6,6 L2.5,9.8"/><circle fill="#fff" cx="19.8" cy="19.8" r="11.6"/><circle fill="#2aa6e0" cx="19.8" cy="19.8" r="9.9"/><path fill="none" stroke="#fff" stroke-width="2" d="M19.6,14 V21.5 L23.5,25"/></svg></div></div><svg class="r" style="left:832px;top:393.8px" width="20" height="24" viewBox="0 0 20 24"><path fill="#fff" stroke="#c8c8c8" stroke-width="1.8" d="M1.5,9 L10,1.2 L18.5,9 V22.5 H1.5 Z"/><path stroke="#c8c8c8" stroke-width="1.8" d="M5.5,14.5 H14.5"/></svg><svg class="r" style="left:832px;top:435.8px" width="20" height="24" viewBox="0 0 20 24"><path fill="#fff" stroke="#c8c8c8" stroke-width="1.8" d="M1.5,9 L10,1.2 L18.5,9 V22.5 H1.5 Z"/><path stroke="#c8c8c8" stroke-width="1.8" d="M5.5,14.5 H14.5"/></svg><svg class="r" style="left:832px;top:813.8px" width="20" height="24" viewBox="0 0 20 24"><path fill="#fff" stroke="#c8c8c8" stroke-width="1.8" d="M1.5,9 L10,1.2 L18.5,9 V22.5 H1.5 Z"/><path stroke="#c8c8c8" stroke-width="1.8" d="M5.5,14.5 H14.5"/></svg><svg class="r" style="left:832px;top:855.8px" width="20" height="24" viewBox="0 0 20 24"><path fill="#fff" stroke="#c8c8c8" stroke-width="1.8" d="M1.5,9 L10,1.2 L18.5,9 V22.5 H1.5 Z"/><path stroke="#c8c8c8" stroke-width="1.8" d="M5.5,14.5 H14.5"/></svg><svg class="r" style="left:832px;top:482.8px" width="20" height="24" viewBox="0 0 20 24"><path fill="#fff" stroke="#c8c8c8" stroke-width="1.8" d="M1.5,1.2 H18.5 V14.5 L10,22.5 L1.5,14.5 Z"/><path stroke="#c8c8c8" stroke-width="1.8" d="M5.5,8 H14.5"/></svg><svg class="r" style="left:832px;top:524.8px" width="20" height="24" viewBox="0 0 20 24"><path fill="#fff" stroke="#c8c8c8" stroke-width="1.8" d="M1.5,1.2 H18.5 V14.5 L10,22.5 L1.5,14.5 Z"/><path stroke="#c8c8c8" stroke-width="1.8" d="M5.5,8 H14.5"/></svg><svg class="r" style="left:832px;top:566.8px" width="20" height="24" viewBox="0 0 20 24"><path fill="#fff" stroke="#c8c8c8" stroke-width="1.8" d="M1.5,1.2 H18.5 V14.5 L10,22.5 L1.5,14.5 Z"/><path stroke="#c8c8c8" stroke-width="1.8" d="M5.5,8 H14.5"/></svg><svg class="r" style="left:832px;top:734.8px" width="20" height="24" viewBox="0 0 20 24"><path fill="#fff" stroke="#c8c8c8" stroke-width="1.8" d="M1.5,1.2 H18.5 V14.5 L10,22.5 L1.5,14.5 Z"/><path stroke="#c8c8c8" stroke-width="1.8" d="M5.5,8 H14.5"/></svg><svg class="r" style="left:832px;top:902.8px" width="20" height="24" viewBox="0 0 20 24"><path fill="#fff" stroke="#c8c8c8" stroke-width="1.8" d="M1.5,1.2 H18.5 V14.5 L10,22.5 L1.5,14.5 Z"/><path stroke="#c8c8c8" stroke-width="1.8" d="M5.5,8 H14.5"/></svg><svg class="r" style="left:832px;top:1070.8px" width="20" height="24" viewBox="0 0 20 24"><path fill="#fff" stroke="#c8c8c8" stroke-width="1.8" d="M1.5,1.2 H18.5 V14.5 L10,22.5 L1.5,14.5 Z"/><path stroke="#c8c8c8" stroke-width="1.8" d="M5.5,8 H14.5"/></svg><svg class="r" style="left:820px;top:960px" width="100" height="60" viewBox="0 0 2380 1428" preserveAspectRatio="none">
<path fill="#f0a30a" d="M1335,800 Q1230,650 1240,540 Q1260,335 1470,330 Q1690,340 1705,540 Q1710,650 1615,800 Z"/>
<rect fill="#4a4f56" x="1335" y="858" width="280" height="42"/>
<path fill="#4a4f56" d="M1360,950 H1590 Q1580,995 1475,995 Q1370,995 1360,950 Z"/>
</svg><svg class="r" style="left:2260px;top:270px" width="180" height="50" viewBox="0 0 2380 661" preserveAspectRatio="none">
<path fill="#6e6e6e" d="M2010,295 Q2167,120 2325,295 Q2167,470 2010,295 Z"/>
<circle fill="#fff" cx="2167" cy="295" r="82"/><circle fill="#6e6e6e" cx="2167" cy="295" r="40"/>
</svg><div class="r" style="left:2418px;top:616px;width:14px;height:312px;background:#c9c9c9;border-radius:7px"></div><svg class="r" style="left:2430px;top:230px" width="60" height="200" viewBox="0 0 470 1568" preserveAspectRatio="none">
<g fill="#6e6e6e"><ellipse cx="225" cy="1265" rx="38" ry="35"/><ellipse cx="225" cy="1360" rx="45" ry="50"/></g>
<path fill="none" stroke="#6e6e6e" stroke-width="16" d="M150,1255 Q170,1300 225,1310 Q280,1300 300,1255 M150,1310 H300 M160,1410 Q160,1345 225,1340 Q290,1345 290,1410"/>
</svg><svg class="r" style="left:2448px;top:493px" width="22" height="27" viewBox="0 0 22 27"><path fill="#6e6e6e" d="M0.5,4.5 A10.5,4.5 0 0 1 21.5,4.5 V22 A10.5,4.5 0 0 1 0.5,22 Z"/><path fill="none" stroke="#f2f2f2" stroke-width="1.8" d="M0.5,9.5 A10.5,4.5 0 0 0 21.5,9.5 M0.5,16 A10.5,4.5 0 0 0 21.5,16"/></svg><svg class="r" style="left:122px;top:354px" width="22" height="18" viewBox="0 0 22 18"><path fill="#6e6e6e" d="M0,0 H9 L11.5,4.5 H22 V18 H0 Z"/></svg><svg class="r" style="left:124px;top:1228px" width="18" height="18" viewBox="0 0 18 18"><g fill="#6e6e6e"><rect x="10.2" y="0" width="7.8" height="7.6"/><rect x="0" y="10.4" width="7.8" height="7.6"/><rect x="10.2" y="10.4" width="7.8" height="7.6"/></g></svg><svg class="r" style="left:120px;top:1426px" width="26" height="25" viewBox="0 0 26 25"><path fill="#6e6e6e" d="M13,0.5 L16.3,9 L25.3,9.3 L18.3,15 L20.8,24 L13,19 L5.2,24 L7.7,15 L0.7,9.3 L9.7,9 Z"/></svg><svg class="r" style="left:150px;top:1210px" width="150" height="260" viewBox="0 0 905 1568" preserveAspectRatio="none">
<path fill="#499c54" d="M145,95 L265,168 L145,240 Z"/>
<circle fill="#bababa" cx="222" cy="470" r="68"/>
<rect fill="#f2f2f2" x="203" y="420" width="30" height="55"/><rect fill="#f2f2f2" x="203" y="490" width="30" height="25"/>
<path fill="#bababa" stroke="#f2f2f2" stroke-width="14" d="M105,440 L205,505 L105,570 Z"/>
<rect fill="#d0d0d0" x="70" y="676" width="245" height="10"/>
<rect fill="#bababa" x="133" y="820" width="120" height="120"/>
<path fill="#6e6e6e" d="M110,1195 Q195,1080 278,1195 Q195,1310 110,1195 Z"/>
<circle fill="#f2f2f2" cx="194" cy="1195" r="50"/><circle fill="#6e6e6e" cx="194" cy="1195" r="28"/>
<path fill="#f2f2f2" d="M215,1255 H315 L265,1315 Z"/>
<path fill="#333" d="M232,1268 H300 L266,1302 Z"/>
<path fill="none" stroke="#6e6e6e" stroke-width="11" d="M160,1465 L188,1488 L160,1511 M205,1465 L233,1488 L205,1511"/>
<path fill="none" stroke="#82c177" stroke-width="32" d="M650,118 L708,172 L785,88"/>
</svg><svg class="r" style="left:2330px;top:1150px" width="150" height="180" viewBox="0 0 1307 1568" preserveAspectRatio="none">
<path fill="#6e6e6e" fill-rule="evenodd" d="M240.7,195.7 L237.6,168.7 L286.4,168.7 L283.3,195.7 L322.6,218.4 L344.4,202.2 L368.9,244.5 L343.9,255.3 L343.9,300.7 L368.9,311.5 L344.4,353.8 L322.6,337.6 L283.3,360.3 L286.4,387.3 L237.6,387.3 L240.7,360.3 L201.4,337.6 L179.6,353.8 L155.1,311.5 L180.1,300.7 L180.1,255.3 L155.1,244.5 L179.6,202.2 L201.4,218.4 Z M300,278 A38,38 0 1 0 224,278 A38,38 0 1 0 300,278 Z"/>
<rect fill="#6e6e6e" x="612" y="262" width="206" height="33"/>
<rect fill="#d2d2d2" x="508" y="592" width="377" height="380" rx="45"/>
<rect fill="#d2d2d2" x="508" y="1045" width="377" height="380" rx="45"/>
<g fill="#6e6e6e">
<rect x="593" y="680" width="208" height="32"/>
<path d="M593,770 H740 Q815,770 815,830 Q815,890 740,890 H720 V858 H740 Q783,858 783,830 Q783,802 740,802 H593 Z"/>
<rect x="593" y="855" width="50" height="30"/>
<path d="M685,874 L735,820 V922 Z"/>
<rect x="593" y="1152" width="67" height="28"/><rect x="593" y="1222" width="67" height="28"/>
<rect x="593" y="1290" width="208" height="32"/>
<rect x="735" y="1115" width="33" height="100"/>
<path d="M690,1205 H815 L752,1265 Z"/>
</g>
</svg><svg class="r" style="left:175px;top:1489px" width="17" height="20" viewBox="0 0 17 20"><path fill="#6e6e6e" d="M0.5,0 L16.5,10 L0.5,20 Z"/></svg><svg class="r" style="left:322px;top:1490px" width="21" height="17" viewBox="0 0 21 17"><g fill="#6e6e6e"><rect x="0" y="0" width="3.5" height="3.5"/><rect x="6" y="0" width="15" height="3.5"/><rect x="0" y="6.5" width="3.5" height="3.5"/><rect x="6" y="6.5" width="15" height="3.5"/><rect x="0" y="13" width="3.5" height="3.5"/><rect x="6" y="13" width="15" height="3.5"/></g></svg><svg class="r" style="left:480px;top:1480px" width="210" height="35" viewBox="0 0 2380 397" preserveAspectRatio="none">
<rect fill="#6e6e6e" x="92" y="92" width="248" height="223"/>
<path fill="none" stroke="#f2f2f2" stroke-width="24" d="M135,130 L190,185 L135,240"/>
<rect fill="#f2f2f2" x="205" y="250" width="90" height="22"/>
<path fill="#6e6e6e" d="M1930,190 L2040,85 L2098,85 L2055,130 L2095,170 L2000,265 Z"/>
<path fill="none" stroke="#6e6e6e" stroke-width="75" d="M2030,180 L2195,335"/>
</svg><svg class="r" style="left:2276px;top:1486px" width="27" height="27" viewBox="0 0 27 27"><path fill="none" stroke="#6e6e6e" stroke-width="3.6" d="M24.7,24.7 H13.5 A11.2,11.2 0 1 1 24.7,13.5 Z"/></svg><svg class="r" style="left:124px;top:1528px" width="24" height="24" viewBox="0 0 24 24"><path fill="none" stroke="#6e6e6e" stroke-width="2" d="M5.3,1 H22.9 V18.7 H5.3 Z M1.2,4.2 V21.6 H19.8"/></svg><svg class="r" style="left:2150px;top:1520px" width="320" height="40" viewBox="0 0 2380 298" preserveAspectRatio="none">
<g fill="#6e6e6e">
<rect x="150" y="135" width="118" height="87"/>
<path fill="none" stroke="#6e6e6e" stroke-width="24" d="M115,130 V105 A35,35 0 0 1 185,105 V140"/>
<rect x="475" y="100" width="180" height="18"/>
<path d="M500,105 V65 Q500,45 525,45 H605 Q630,45 630,65 V105 Z"/>
<path fill="none" stroke="#6e6e6e" stroke-width="14" d="M510,125 V165 Q510,205 565,205 Q620,205 620,165 V125"/>
<circle cx="540" cy="145" r="8"/><circle cx="590" cy="145" r="8"/>
<path fill="none" stroke="#6e6e6e" stroke-width="9" d="M540,172 Q565,188 590,172"/>
<path d="M485,238 Q495,212 540,210 H590 Q635,212 645,238 Z"/>
<path d="M1740,190 Q1705,185 1710,140 Q1715,105 1755,105 Q1770,50 1830,50 Q1890,55 1900,110 Q1935,120 1935,160 Q1930,190 1900,190 Z"/>
<path fill="#f2f2f2" fill-rule="evenodd" d="M1884.0,172.4 L1881.5,154.5 L1908.5,154.5 L1906.0,172.4 L1926.4,184.2 L1940.6,173.0 L1954.2,196.5 L1937.4,203.2 L1937.4,226.8 L1954.2,233.5 L1940.6,257.0 L1926.4,245.8 L1906.0,257.6 L1908.5,275.5 L1881.5,275.5 L1884.0,257.6 L1863.6,245.8 L1849.4,257.0 L1835.8,233.5 L1852.6,226.8 L1852.6,203.2 L1835.8,196.5 L1849.4,173.0 L1863.6,184.2 Z M1895.01,215 A0.01,0.01 0 1 0 1894.99,215 A0.01,0.01 0 1 0 1895.01,215 Z"/>
<path fill-rule="evenodd" d="M1886.0,180.1 L1884.1,166.2 L1905.9,166.2 L1904.0,180.1 L1920.7,189.8 L1931.8,181.2 L1942.7,200.0 L1929.7,205.4 L1929.7,224.6 L1942.7,230.0 L1931.8,248.8 L1920.7,240.2 L1904.0,249.9 L1905.9,263.8 L1884.1,263.8 L1886.0,249.9 L1869.3,240.2 L1858.2,248.8 L1847.3,230.0 L1860.3,224.6 L1860.3,205.4 L1847.3,200.0 L1858.2,181.2 L1869.3,189.8 Z M1911,215 A16,16 0 1 0 1879,215 A16,16 0 1 0 1911,215 Z"/>
</g>
<path fill="none" stroke="#f2f2f2" stroke-width="22" d="M1790,110 Q1790,75 1825,75 Q1860,75 1860,105 Q1860,125 1835,135 Q1822,140 1822,160"/>
<rect fill="#f2f2f2" x="1810" y="168" width="24" height="20"/>
<circle fill="#db5860" cx="2187" cy="150" r="90"/>
<rect fill="#fff" x="2174" y="85" width="27" height="77"/><rect fill="#fff" x="2174" y="180" width="27" height="28"/>
</svg><svg class="r" style="left:968px;top:1129px" width="8" height="12" viewBox="0 0 8 12"><path fill="none" stroke="#a6a6a6" stroke-width="1.6" d="M1,0.8 L6.5,6 L1,11.2"/></svg><svg class="r" style="left:1074px;top:1129px" width="8" height="12" viewBox="0 0 8 12"><path fill="none" stroke="#a6a6a6" stroke-width="1.6" d="M1,0.8 L6.5,6 L1,11.2"/></svg><svg class="r" style="left:1205.5px;top:1129px" width="8" height="12" viewBox="0 0 8 12"><path fill="none" stroke="#a6a6a6" stroke-width="1.6" d="M1,0.8 L6.5,6 L1,11.2"/></svg><svg class="r" style="left:1325.5px;top:1129px" width="8" height="12" viewBox="0 0 8 12"><path fill="none" stroke="#a6a6a6" stroke-width="1.6" d="M1,0.8 L6.5,6 L1,11.2"/></svg><svg class="r" style="left:257px;top:1171px" width="30" height="21" viewBox="0 0 100 70" preserveAspectRatio="none"><path fill="none" stroke="#a9d9ef" stroke-width="14.5" d="M12,70 L21,0 M20.5,14 Q25,6.7 37,6.7 Q52.5,6.7 51,21 L45.5,70 M51,17 Q56,6.7 69.5,6.7 Q86.5,6.7 84.5,21 L79,70"/></svg><svg class="r" style="left:820px;top:1176px" width="16" height="16" viewBox="0 0 16 16"><path d="M1,1 L15,15 M15,1 L1,15" stroke="#c0c0c0" stroke-width="2.2"/></svg><div id="wb"></div></body></html>
